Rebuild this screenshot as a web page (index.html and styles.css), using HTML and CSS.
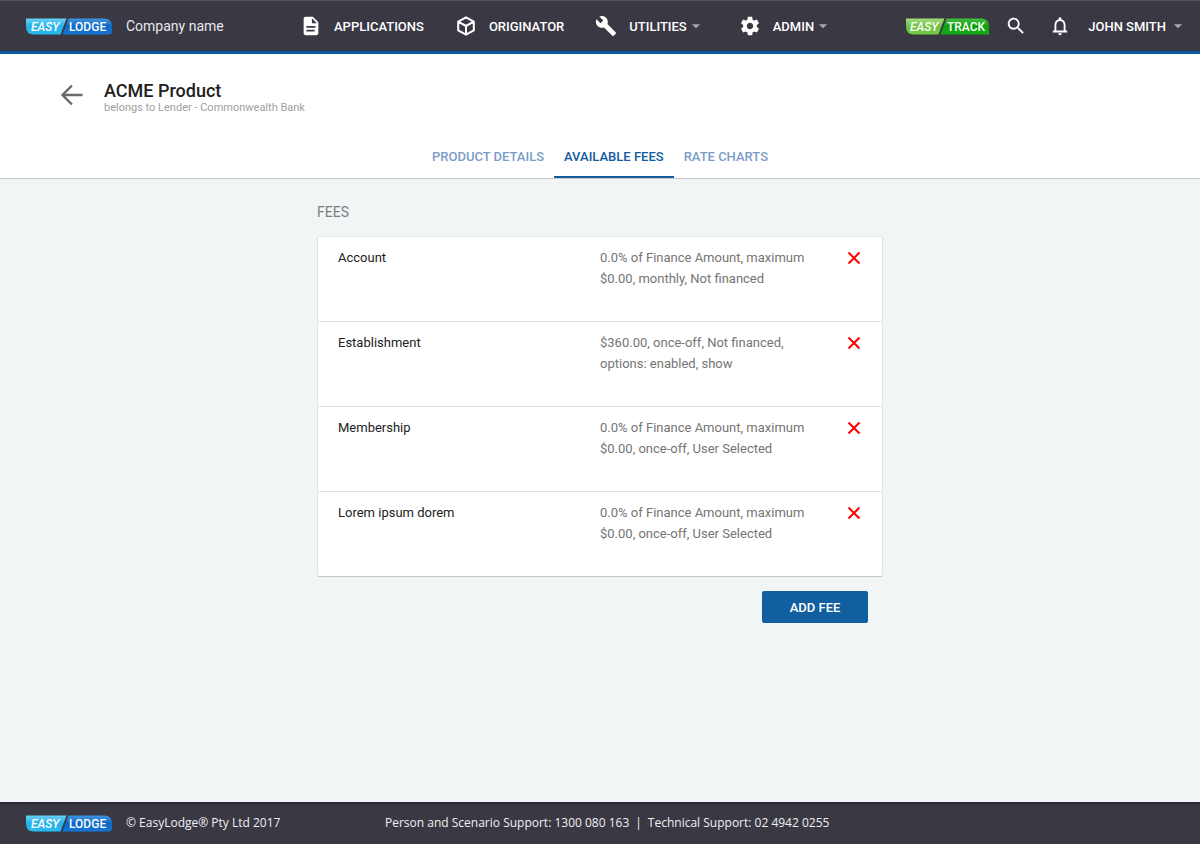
FILE: index.html
```html
<!DOCTYPE html>
<html lang="en">
<head>
<meta charset="utf-8">
<meta name="viewport" content="width=device-width, initial-scale=1">
<title>ACME Product - Available Fees</title>
<link rel="stylesheet" href="styles.css">
</head>
<body>
<svg class="defs" width="0" height="0" aria-hidden="true">
  <defs>
    <linearGradient id="cyan" x1="0" y1="0" x2="0" y2="1"><stop offset="0" stop-color="#67d4f5"/><stop offset=".5" stop-color="#25b0e8"/><stop offset="1" stop-color="#26bdf0"/></linearGradient>
    <linearGradient id="blue" x1="0" y1="0" x2="0" y2="1"><stop offset="0" stop-color="#4096e0"/><stop offset=".5" stop-color="#0f66c4"/><stop offset="1" stop-color="#1478d6"/></linearGradient>
    <linearGradient id="lime" x1="0" y1="0" x2="0" y2="1"><stop offset="0" stop-color="#a3dc7c"/><stop offset=".5" stop-color="#6cc242"/><stop offset="1" stop-color="#72cb45"/></linearGradient>
    <linearGradient id="green" x1="0" y1="0" x2="0" y2="1"><stop offset="0" stop-color="#3fc03c"/><stop offset=".5" stop-color="#0fa010"/><stop offset="1" stop-color="#14ad16"/></linearGradient>
    <symbol id="lodge" viewBox="0 0 86 17">
      <path fill="url(#cyan)" d="M0 0.5H40.5L34.5 16.5H8Q0 16.5 0 8.5Z"/>
      <path fill="url(#blue)" d="M42.500 .5H78Q86 .5 86 8.500V13Q86 16.500 82 16.500H36.500Z"/>
      <text class="logo-text logo-slant" x="5" y="13">EASY</text>
      <text class="logo-text" x="43" y="13">LODGE</text>
    </symbol>
    <symbol id="caret" viewBox="0 0 24 24"><path d="M6.500 9.500h11L12 15z"/></symbol>
    <symbol id="cross" viewBox="0 0 14 14"><path d="M1.500 1.500l11 11M12.500 1.500l-11 11" fill="none" stroke="#ff0000" stroke-width="2"/></symbol>
  </defs>
</svg>

<header class="topbar">
  <a class="brand" href="#">
    <svg class="logo" role="img" aria-label="EasyLodge"><use href="#lodge"/></svg>
    <span class="company">Company name</span>
  </a>
  <nav class="nav" aria-label="Main">
    <a class="nav-item" href="#">
      <svg class="icon" viewBox="0 0 24 24"><path d="M14 2H6c-1.100 0-2 .9-2 2v16c0 1.100.9 2 2 2h12c1.100 0 2-.9 2-2V8l-6-6zm2 16H7v-2h9v2zm1-4H7v-2h10v2zm-4-5V3.500L18.500 9H13z"/></svg>
      <span>APPLICATIONS</span>
    </a>
    <a class="nav-item" href="#">
      <svg class="icon" viewBox="0 0 24 24"><path d="M12 2.500l8.500 4.700v9.600L12 21.500l-8.500-4.700V7.200zM3.500 7.200L12 12l8.500-4.800M12 12v9.500" fill="none" stroke="#fff" stroke-width="2.200" stroke-linejoin="round"/></svg>
      <span>ORIGINATOR</span>
    </a>
    <button class="nav-item" type="button">
      <svg class="icon" viewBox="0 0 24 24"><path d="M22.700 19l-9.100-9.100c.9-2.300.4-5-1.500-6.900-2-2-5-2.400-7.400-1.300L9 6 6 9 1.600 4.700C.4 7.100.9 10.100 2.900 12.100c1.900 1.900 4.600 2.400 6.900 1.500l9.100 9.100c.4.400 1 .4 1.400 0l2.300-2.300c.5-.4.5-1.100.1-1.400z"/></svg>
      <span>UTILITIES</span>
      <svg class="caret"><use href="#caret"/></svg>
    </button>
    <button class="nav-item" type="button">
      <svg class="icon" viewBox="0 0 24 24"><path d="M19.430 12.980c.04-.32.070-.64.070-.98s-.03-.66-.07-.98l2.110-1.650c.19-.15.240-.42.120-.64l-2-3.460c-.12-.22-.39-.3-.61-.22l-2.490 1c-.52-.4-1.080-.73-1.690-.98l-.38-2.650C14.460 2.180 14.250 2 14 2h-4c-.25 0-.46.180-.49.420l-.38 2.650c-.61.250-1.170.590-1.690.98l-2.490-1c-.23-.09-.49 0-.61.220l-2 3.460c-.13.220-.07.490.12.640l2.110 1.650c-.04.320-.07.650-.07.980s.03.660.07.980l-2.110 1.650c-.19.150-.24.420-.12.640l2 3.460c.12.220.39.300.61.220l2.490-1c.52.400 1.080.73 1.690.98l.38 2.650c.03.240.24.420.49.420h4c.25 0 .46-.18.490-.42l.38-2.650c.61-.25 1.170-.59 1.690-.98l2.490 1c.23.090.49 0 .61-.22l2-3.460c.12-.22.070-.49-.12-.64l-2.110-1.650zM12 15.500c-1.930 0-3.500-1.570-3.500-3.500s1.570-3.500 3.500-3.500 3.500 1.570 3.500 3.500-1.570 3.500-3.500 3.500z"/></svg>
      <span>ADMIN</span>
      <svg class="caret"><use href="#caret"/></svg>
    </button>
  </nav>
  <div class="tools">
    <a class="track" href="#">
      <svg class="logo" viewBox="0 0 83 17" role="img" aria-label="EasyTrack">
        <path fill="url(#lime)" d="M0 .5H38.500L32.500 16.500H8Q0 16.500 0 8.500Z"/>
        <path fill="url(#green)" d="M40.500 .5H75Q83 .5 83 8.500V16.500H34.500Z"/>
        <text class="logo-text logo-slant" x="4" y="13">EASY</text>
        <text class="logo-text" x="41" y="13">TRACK</text>
      </svg>
    </a>
    <button class="tool" type="button" aria-label="Search">
      <svg class="icon" viewBox="0 0 24 24"><path d="M15.500 14h-.79l-.28-.27C15.410 12.590 16 11.110 16 9.500 16 5.910 13.090 3 9.500 3S3 5.910 3 9.500 5.910 16 9.500 16c1.610 0 3.090-.59 4.230-1.570l.27.280v.79l5 4.990L20.490 19l-4.990-5zm-6 0C7.010 14 5 11.990 5 9.500S7.010 5 9.500 5 14 7.010 14 9.500 11.990 14 9.500 14z"/></svg>
    </button>
    <button class="tool" type="button" aria-label="Notifications">
      <svg class="icon" viewBox="0 0 24 24"><path d="M12 22c1.100 0 2-.9 2-2h-4c0 1.100.9 2 2 2zm6-6v-5c0-3.070-1.630-5.640-4.500-6.320V4c0-.83-.67-1.500-1.500-1.500s-1.500.67-1.500 1.500v.68C7.640 5.360 6 7.920 6 11v5l-2 2v1h16v-1l-2-2zm-2 1H8v-6c0-2.480 1.510-4.500 4-4.500s4 2.020 4 4.500v6z"/></svg>
    </button>
    <button class="user" type="button"><span>JOHN SMITH</span><svg class="caret"><use href="#caret"/></svg></button>
  </div>
</header>

<section class="heading">
  <div class="title-row">
    <a class="back" href="#" aria-label="Back"><svg class="back-icon" viewBox="0 0 22 22"><path d="M21.500 11H2M11 1.500L1.500 11l9.500 9.500" fill="none" stroke="#6b6b6b" stroke-width="2.400"/></svg></a>
    <div>
      <h1 class="title">ACME Product</h1>
      <p class="subtitle">belongs to Lender - Commonwealth Bank</p>
    </div>
  </div>
  <nav class="tabs" aria-label="Product sections">
    <a class="tab" href="#">PRODUCT DETAILS</a>
    <a class="tab tab-active" href="#" aria-current="page">AVAILABLE FEES</a>
    <a class="tab" href="#">RATE CHARTS</a>
  </nav>
</section>

<main class="content">
  <h2 class="section-title">FEES</h2>
  <div class="card">
    <table class="fees">
      <tbody>
        <tr><th scope="row">Account</th><td>0.0% of Finance Amount, maximum $0.00, monthly, Not financed</td><td class="action"><button class="remove" type="button" aria-label="Remove Account"><svg class="cross"><use href="#cross"/></svg></button></td></tr>
        <tr><th scope="row">Establishment</th><td>$360.00, once-off, Not financed, options: enabled, show</td><td class="action"><button class="remove" type="button" aria-label="Remove Establishment"><svg class="cross"><use href="#cross"/></svg></button></td></tr>
        <tr><th scope="row">Membership</th><td>0.0% of Finance Amount, maximum $0.00, once-off, User Selected</td><td class="action"><button class="remove" type="button" aria-label="Remove Membership"><svg class="cross"><use href="#cross"/></svg></button></td></tr>
        <tr><th scope="row">Lorem ipsum dorem</th><td>0.0% of Finance Amount, maximum $0.00, once-off, User Selected</td><td class="action"><button class="remove" type="button" aria-label="Remove Lorem ipsum dorem"><svg class="cross"><use href="#cross"/></svg></button></td></tr>
      </tbody>
    </table>
  </div>
  <div class="actions"><button class="add" type="button">ADD FEE</button></div>
</main>

<footer class="footer">
  <div class="footer-brand">
    <svg class="logo" role="img" aria-label="EasyLodge"><use href="#lodge"/></svg>
    <span>© EasyLodge® Pty Ltd 2017</span>
  </div>
  <div class="support">
    <span>Person and Scenario Support: 1300 080 163</span>
    <span>|</span>
    <span>Technical Support: 02 4942 0255</span>
  </div>
</footer>
</body>
</html>
```

FILE: styles.css
```css
* { box-sizing: border-box; }

body {
  margin: 0;
  min-height: 100vh;
  display: flex;
  flex-direction: column;
  background: #f1f5f6;
  color: #212121;
  font: 13px/21px Roboto, sans-serif;
}

h1, h2, p { margin: 0; }
a { color: inherit; text-decoration: none; }
button { border: 0; padding: 0; background: none; color: inherit; font: inherit; cursor: pointer; }
svg { display: block; flex: none; }
.defs { position: absolute; }

.topbar {
  display: flex;
  align-items: center;
  height: 54px;
  padding: 0 13px 0 26px;
  background: #3a3843;
  border-top: 1px solid #55545c;
  border-bottom: 3px solid #0b5a9f;
  color: #fff;
}

.brand { display: flex; align-items: center; gap: 14px; width: 274px; }
.logo { width: 86px; height: 17px; }
.logo-text { fill: #fff; font: 500 12px Roboto, sans-serif; }
.logo-slant { font-style: italic; }
.company { font-size: 14px; color: #e8e8ea; }

.nav { display: flex; align-items: center; gap: 31px; }
.nav-item { display: flex; align-items: center; font-weight: 500; }
.icon { width: 22px; height: 22px; fill: #fff; }
.nav-item .icon { margin-right: 12px; }
.caret { width: 18px; height: 18px; fill: #a9a8ae; }
.nav-item .caret { margin-right: 3px; }

.tools { display: flex; align-items: center; margin-left: auto; }
.track .logo { width: 83px; }
.tool { margin-left: 16px; }
.tool + .tool { margin-left: 22px; }
.user { display: flex; align-items: center; gap: 3px; margin-left: 17px; font-weight: 500; }

.heading { background: #fff; border-bottom: 1px solid #c8cacb; }
.title-row { display: flex; align-items: flex-start; gap: 21px; padding: 26px 61px 0; }
.back { padding-top: 4px; }
.back-icon { width: 22px; height: 22px; }
.title { font-size: 18px; line-height: 21px; font-weight: 500; }
.subtitle { font-size: 11px; line-height: 13px; color: #a0a0a0; }

.tabs { display: flex; justify-content: center; margin-top: 20px; }
.tab {
  padding: 12px 10px 9px;
  border-bottom: 2px solid transparent;
  color: #7b9cc6;
  font-weight: 500;
}
.tab-active { color: #115b9e; border-color: #115b9e; }

.content { flex: 1; width: 100%; max-width: 566px; margin: 0 auto; padding: 23px 0 32px; }
.section-title { font-size: 14px; line-height: 21px; font-weight: 400; color: #7c7f80; }
.card {
  margin-top: 13px;
  background: #fff;
  border: 1px solid #e3e6e7;
  border-bottom-color: #c4c7c8;
  border-radius: 2px;
}
.fees { width: 100%; border-collapse: separate; border-spacing: 0; table-layout: fixed; }
.fees th, .fees td {
  height: 85px;
  padding: 10px 0;
  border-bottom: 1px solid #e0e2e3;
  vertical-align: top;
  text-align: left;
}
.fees tr:last-child > * { height: 84px; border-bottom: 0; }
.fees th { width: 50%; padding-left: 20px; font-weight: 400; }
.fees td { color: #757575; }
.fees .action { width: 60px; padding-right: 21px; }
.remove { display: block; margin: 4px 0 0 auto; }
.cross { width: 14px; height: 14px; }

.actions { display: flex; justify-content: flex-end; padding: 14px 15px 0; }
.add {
  width: 106px;
  height: 32px;
  border-radius: 2px;
  background: #115f9f;
  color: #fff;
  font-weight: 500;
}

.footer {
  display: flex;
  align-items: center;
  height: 42px;
  padding: 0 26px 2px;
  background: #3a3843;
  border-top: 2px solid #2c2a38;
  color: #f0f0f2;
  font: 12px/18px "Open Sans", sans-serif;
}
.footer-brand { display: flex; align-items: center; gap: 14px; width: 359px; }
.support { display: flex; gap: 6px; }
```
